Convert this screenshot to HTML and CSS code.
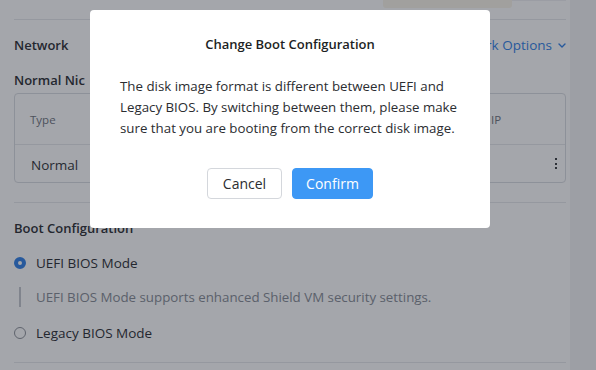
FILE: index.html
```html
<!DOCTYPE html>
<html>
<head>
<meta charset="utf-8">
<link rel="stylesheet" href="styles.css">
</head>
<body>
<div class="app">
  <div class="main">
    <div class="page">
      <div class="top-strip">
        <div class="tip-box"></div>
        <div class="tip-edge"></div>
      </div>
      <div class="rule first"></div>
      <div class="sec-head">
        <span class="sec-title">Network</span>
        <span class="link">Network Options
          <svg class="chev" width="8" height="5" viewBox="0 0 8 5"><path d="M1 1 L4 4 L7 1" fill="none" stroke="currentColor" stroke-width="1.4" stroke-linecap="round" stroke-linejoin="round"/></svg>
        </span>
      </div>
      <div class="sub-title">Normal Nic</div>
      <div class="table">
        <div class="thead">
          <span class="c-type">Type</span>
          <span class="c-ip">IP</span>
          <span></span>
        </div>
        <div class="trow">
          <span class="c-type">Normal</span>
          <span class="c-ip"></span>
          <span class="kebab"><i></i><i></i><i></i></span>
        </div>
      </div>
      <div class="rule mid"></div>
      <div class="boot-title">Boot Configuration</div>
      <div class="radio-row first-radio">
        <span class="radio on"></span>
        <span class="radio-label">UEFI BIOS Mode</span>
      </div>
      <div class="desc">UEFI BIOS Mode supports enhanced Shield VM security settings.</div>
      <div class="radio-row second-radio">
        <span class="radio"></span>
        <span class="radio-label">Legacy BIOS Mode</span>
      </div>
      <div class="rule last"></div>
    </div>
  </div>
  <div class="side"></div>
</div>

<div class="overlay">
  <div class="modal">
    <div class="modal-title">Change Boot Configuration</div>
    <p class="modal-body">The disk image format is different between UEFI and Legacy BIOS. By switching between them, please make sure that you are booting from the correct disk image.</p>
    <div class="modal-actions">
      <button class="btn btn-cancel">Cancel</button>
      <button class="btn btn-confirm">Confirm</button>
    </div>
  </div>
</div>
</body>
</html>
```

FILE: styles.css
```css
* { box-sizing: border-box; }
html, body { margin: 0; padding: 0; }
body {
  width: 596px;
  height: 370px;
  overflow: hidden;
  font-family: "Open Sans", Lato, sans-serif;
  color: #303236;
  background: #f3f4f6;
}
.app { display: flex; height: 370px; }
.main { width: 570px; background: #ffffff; }
.side { flex: 1; background: #f3f4f6; }
.page { padding-left: 14px; width: 566px; }

.top-strip {
  height: 8px;
  display: flex;
  padding-left: 369px;
}
.tip-box {
  width: 129px;
  height: 8px;
  background: #fbf6ea;
  border-radius: 0 0 3px 3px;
}
.tip-edge {
  width: 54px;
  height: 1px;
  background: #f0f1f4;
}

.rule { border-top: 1px solid #e6e8eb; }
.rule.first { margin-top: 11px; }
.rule.mid { margin-top: 19px; }
.rule.last { margin-top: 19px; }

.sec-head {
  margin-top: 15px;
  height: 20px;
  display: flex;
  align-items: center;
  justify-content: space-between;
}
.sec-title, .sub-title, .boot-title {
  font-size: 13px;
  font-weight: 600;
  color: #2a2c31;
  line-height: 20px;
}
.link {
  font-size: 13.5px;
  color: #2f7fe6;
  display: flex;
  align-items: center;
  gap: 6px;
}
.sub-title { margin-top: 15px; }

.table {
  margin-top: 3px;
  border: 1px solid #d9dce1;
  border-radius: 4px;
}
.thead, .trow {
  display: grid;
  grid-template-columns: 461px 1fr auto;
  align-items: center;
  padding-left: 15px;
  padding-right: 8px;
}
.thead {
  height: 51px;
  border-bottom: 1px solid #e6e8eb;
  font-size: 11.5px;
  color: #6e737c;
}
.trow {
  height: 37px;
  font-size: 13.5px;
  color: #2f3135;
}
.trow .c-type { padding-left: 1px; padding-top: 2px; }
.kebab {
  display: flex;
  flex-direction: column;
  gap: 2.3px;
  align-items: flex-end;
}
.kebab i {
  display: block;
  width: 2px;
  height: 2px;
  background: #3a3c40;
}

.boot-title { margin-top: 15px; }
.radio-row {
  height: 20px;
  display: flex;
  align-items: center;
  gap: 10px;
}
.first-radio { margin-top: 15px; }
.second-radio { margin-top: 16px; }
.radio {
  width: 12px;
  height: 12px;
  border-radius: 50%;
  border: 1px solid #8c9098;
  background: #fff;
}
.radio.on {
  border: 4px solid #2f7fe6;
  background: #fff;
}
.radio-label {
  font-size: 13.5px;
  font-weight: 500;
  color: #2a2c31;
}
.desc {
  margin-top: 14px;
  margin-left: 5px;
  height: 20px;
  line-height: 20px;
  border-left: 2px solid #c4c7cd;
  padding-left: 15px;
  font-size: 13.3px;
  color: #868b94;
}

.overlay {
  position: fixed;
  inset: 0;
  background: rgba(28, 32, 44, 0.4);
}
.modal {
  margin: 10px 0 0 90px;
  width: 400px;
  height: 218px;
  background: #ffffff;
  border-radius: 4px;
  padding: 24px 30px 0 30px;
}
.modal-title {
  text-align: center;
  font-size: 13px;
  font-weight: 600;
  line-height: 20px;
  color: #1d1f24;
}
.modal-body {
  margin: 22px 0 0 0;
  font-size: 13.3px;
  line-height: 21px;
  color: #2b2d31;
}
.modal-actions {
  margin-top: 29px;
  display: flex;
  justify-content: center;
  gap: 10px;
}
.btn {
  height: 31px;
  border-radius: 4px;
  font-family: "Open Sans", Lato, sans-serif;
  font-size: 14px;
  cursor: pointer;
}
.btn-cancel {
  width: 75px;
  background: #fff;
  border: 1px solid #d4d7dc;
  color: #2b2d31;
}
.btn-confirm {
  width: 81px;
  background: #3d98f5;
  border: 1px solid #3d98f5;
  color: #fff;
}
```
